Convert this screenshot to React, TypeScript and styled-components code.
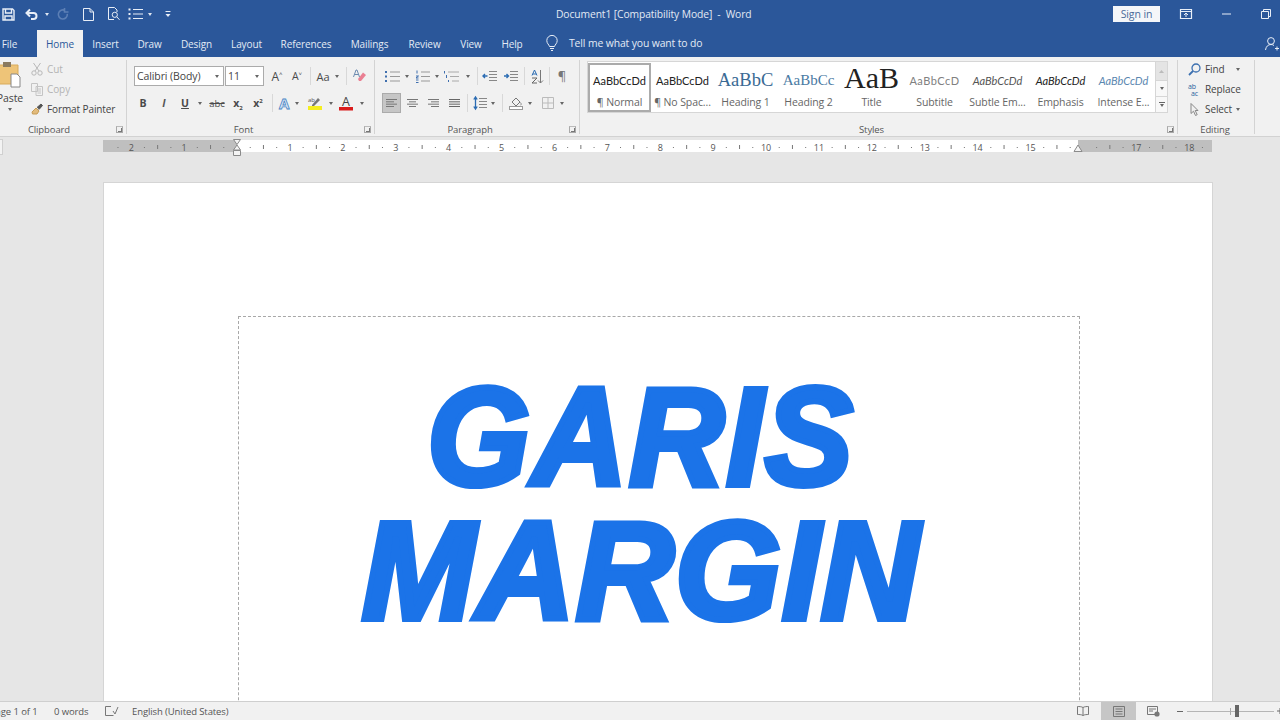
import React from "react";
import styled, { createGlobalStyle } from "styled-components";

const Global = createGlobalStyle`
  html, body { margin: 0; padding: 0; background: #e6e6e6; }
  body { font-family: "Open Sans", "Liberation Sans", sans-serif; }
`;

const Win = styled.div`
  width: 1280px; height: 720px; overflow: hidden; display: flex; flex-direction: column;
  font-size: 10.5px; color: #444; letter-spacing: -0.1px;
`;
const TitleBar = styled.div`
  height: 28px; flex: none; background: #2b579a; display: flex; align-items: center; color: #e6edf6;
`;
const Qat = styled.div`width: 556px; flex: none; display: flex; align-items: center; margin-left: -3px; margin-right: 3px;`;
const DocTitle = styled.div`width: 557px; flex: none; font-size: 10.3px; white-space: pre; color: #e3eaf4;`;
const SignIn = styled.div`
  width: 47px; height: 16px; flex: none; background: #f4f6f9; color: #4a6a99; font-size: 10.5px;
  display: flex; align-items: center; justify-content: center;
`;
const Cell = styled.div<{ $w: number }>`
  width: ${p => p.$w}px; flex: none; display: flex; align-items: center; justify-content: center; height: 100%;
`;
const Svg = styled.svg`flex: none; display: block; overflow: visible;`;
const RulerSvg = styled(Svg)`margin-left: 100px;`;
const TabBar = styled.div`
  height: 29px; flex: none; background: #2b579a; display: flex; align-items: flex-end; color: #e4ebf5; font-size: 10px;
`;
const Tab = styled.div<{ $w: number; $active?: boolean; $rp?: number }>`
  width: ${p => p.$w}px; box-sizing: border-box; height: 27px; flex: none; display: flex; align-items: center; justify-content: center;
  padding-right: ${p => p.$rp ?? 0}px; padding-top: 1px;
  background: ${p => (p.$active ? "#f1f1f1" : "transparent")};
  color: ${p => (p.$active ? "#2b579a" : "inherit")};
`;
const TellMe = styled.div`
  display: flex; align-items: center; gap: 11px; margin-left: 13px; height: 27px; padding-bottom: 2px; box-sizing: border-box;
  font-size: 10.4px; letter-spacing: -0.12px;
`;
const Person = styled.div`margin-left: auto; margin-right: 1px; height: 27px; display: flex; align-items: center;`;

const Ribbon = styled.div`
  height: 80px; flex: none; box-sizing: border-box; background: #f1f1f1; border-bottom: 1px solid #d2d2d2; display: flex; padding-top: 3px;
`;
const Group = styled.div<{ $w: number }>`
  width: ${p => p.$w}px; flex: none; box-sizing: border-box; height: 74px; border-right: 1px solid #d3d3d3; display: flex; flex-direction: column;
`;
const GroupBody = styled.div<{ $pt?: number; $pl?: number; $gap?: number; $row?: boolean }>`
  height: 62px; box-sizing: border-box; display: flex; flex-direction: ${p => (p.$row ? "row" : "column")};
  padding-top: ${p => p.$pt ?? 0}px; padding-left: ${p => p.$pl ?? 0}px; gap: ${p => p.$gap ?? 0}px;
`;
const GroupFoot = styled.div<{ $pr?: number }>`
  height: 12px; box-sizing: border-box; display: flex; align-items: center; justify-content: center; position: relative; color: #555; font-size: 9.5px;
  padding-top: 2px; padding-right: ${p => p.$pr ?? 14}px;
`;
const Launcher = styled.div`
  position: absolute; right: 3px; top: 4px; width: 7px; height: 7px; border: 1px solid #a9a9a9; border-top-color: #bbb; box-sizing: border-box;
  &::after { content: ""; position: absolute; right: 0; bottom: 0; width: 3px; height: 3px; border-right: 1px solid #777; border-bottom: 1px solid #777; }
`;
const Row = styled.div<{ $pl?: number }>`
  height: 20px; flex: none; display: flex; align-items: center; padding-left: ${p => p.$pl ?? 0}px;
`;
const Caret = styled.i<{ $light?: boolean }>`
  display: block; width: 0; height: 0; border-left: 2.5px solid transparent; border-right: 2.5px solid transparent;
  border-top: 3px solid ${p => (p.$light ? "#dfe7f2" : "#666")};
`;
const Divider = styled.i`display: block; width: 1px; height: 18px; background: #d8d8d8;`;
const FontBox = styled.div<{ $w: number }>`
  width: ${p => p.$w}px; height: 20px; flex: none; margin-right: 1px; box-sizing: border-box; background: #fff; border: 1px solid #ababab;
  display: flex; align-items: center; justify-content: space-between; padding: 0 4px 0 2px; font-size: 10.5px; color: #444;
`;
const Tool = styled.span<{ $b?: boolean; $i?: boolean; $s?: number; $c?: string; $under?: boolean; $strike?: boolean; $outline?: boolean }>`
  font-weight: ${p => (p.$b ? 700 : 400)}; font-style: ${p => (p.$i ? "italic" : "normal")}; font-size: ${p => p.$s ?? 10.5}px;
  color: ${p => p.$c ?? "#4a4a4a"}; text-decoration: ${p => (p.$strike ? "line-through" : p.$under ? "underline" : "none")};
  ${p => (p.$outline ? "-webkit-text-stroke: 0.8px #4b86c5;" : "")}
  sub, sup { font-size: 6px; line-height: 0; }
`;
const ActiveCell = styled(Cell)`
  height: 20px; box-sizing: border-box; background: #c6c6c6; border: 1px solid #ababab;
`;
const ActionRow = styled(Row)<{ $dim?: boolean }>`
  gap: 4px; color: ${p => (p.$dim ? "#b4b4b4" : "#444")}; font-size: 10px;
`;
const PasteCol = styled.div`width: 21px; flex: none; display: flex; flex-direction: column; align-items: center; color: #444;`;
const PasteLabel = styled.div`margin-top: 5px; height: 14px; font-size: 10.5px; margin-left: -1px;`;
const PasteCaret = styled.div`margin-top: 3px; margin-left: -2px;`;
const ClipList = styled.div<{ $ml?: number }>`display: flex; flex-direction: column; margin-left: ${p => p.$ml ?? 10}px; margin-top: -1px;`;

const Gallery = styled.div`
  width: 568px; height: 52px; flex: none; box-sizing: border-box; background: #fff; border: 1px solid #d6d6d6; border-right: none; display: flex; padding: 1px 0 0 0;
`;
const StyleItem = styled.div<{ $on?: boolean }>`
  width: 63px; height: 49px; flex: none; box-sizing: border-box; display: flex; flex-direction: column; align-items: center;
  border: 2px solid ${p => (p.$on ? "#ababab" : "transparent")}; overflow: hidden;
`;
const Preview = styled.div<{ $font?: string; $s?: number; $c?: string; $i?: boolean; $ls?: number; $pb?: number }>`
  height: 29px; width: 59px; flex: none; overflow: hidden; white-space: nowrap; display: flex; justify-content: center; align-items: center;
  font-family: ${p => p.$font ?? "Lato, sans-serif"}; font-size: ${p => p.$s ?? 11}px; color: ${p => p.$c ?? "#222"};
  font-style: ${p => (p.$i ? "italic" : "normal")}; letter-spacing: ${p => p.$ls ?? 0}px; padding-top: 1px; padding-bottom: ${p => p.$pb ?? 0}px;
  box-sizing: border-box; clip-path: inset(3px 0 0 0);
`;
const StyleName = styled.div`font-size: 10.5px; color: #666; white-space: nowrap; height: 16px; line-height: 16px;`;
const Scroll = styled.div`width: 13px; height: 52px; flex: none; box-sizing: border-box; display: flex; flex-direction: column; border: 1px solid #d6d6d6;`;
const ScrollBtn = styled.div<{ $h: number; $top?: boolean }>`
  height: ${p => p.$h}px; box-sizing: border-box; display: flex; align-items: center; justify-content: center; flex-direction: column; gap: 1px;
  background: ${p => (p.$top ? "#e4e4e4" : "#f8f8f8")}; border-bottom: 1px solid #d6d6d6;
  &:last-child { border-bottom: none; }
`;

const Doc = styled.div`flex: 1; min-height: 0; overflow: hidden; background: #e6e6e6; display: flex; flex-direction: column;`;
const RulerBar = styled.div`height: 20px; flex: none; display: flex;`;
const RulerCorner = styled.div`width: 3px; height: 16px; margin-top: 2px; box-sizing: border-box; background: #f3f3f3; border: 1px solid #d0d0d0; border-left: none;`;
const Page = styled.div`
  margin: 25px 0 0 103px; width: 1110px; box-sizing: border-box; background: #fff; border: 1px solid #d5d5d5; padding: 133px 134px 0 134px;
`;
const MarginBox = styled.div`
  width: 842px; height: 600px; box-sizing: border-box; border: 1px dashed #a8a8a8; padding: 53px 36px 0 0; text-align: center;
`;
const BigLine = styled.div<{ $ls: number; $sx: number }>`
  font-family: "Liberation Sans", Arial, sans-serif; font-weight: 700; font-style: italic; font-size: 139px; line-height: 134px;
  color: #1b73e8; -webkit-text-stroke: 6px #1b73e8; letter-spacing: ${p => p.$ls}px; white-space: nowrap;
  transform: scaleX(${p => p.$sx});
`;
const Status = styled.div`
  height: 19px; flex: none; box-sizing: border-box; background: #f1f1f1; border-top: 1px solid #cfcfcf; display: flex; align-items: center; font-size: 9.5px; color: #555;
`;
const PageCount = styled.div`margin-left: -10px; width: 64px; flex: none; white-space: nowrap;`;
const Words = styled.div`width: 50px; flex: none; white-space: nowrap;`;
const Lang = styled.div`margin-left: 13px; white-space: nowrap;`;
const StatusRight = styled.div`margin-left: auto; height: 100%; display: flex; align-items: center; flex: none; width: 220px;`;
const ViewBtn = styled.div<{ $w: number; $on?: boolean; $pl?: number }>`
  width: ${p => p.$w}px; height: 100%; flex: none; display: flex; align-items: center; justify-content: center; box-sizing: border-box;
  padding-left: ${p => p.$pl ?? 0}px; background: ${p => (p.$on ? "#c6c6c6" : "transparent")};
`;
const ZoomMinus = styled.div`margin-left: 7px; display: flex;`;
const Slider = styled.div`
  width: 87px; height: 1px; flex: none; background: #b5b5b5; position: relative; margin-left: 4px;
`;
const Thumb = styled.div`position: absolute; left: 48px; top: -6px; width: 4px; height: 12px; background: #666;`;
const Notch = styled.div`position: absolute; left: 43px; top: -3px; width: 1px; height: 7px; background: #aaa;`;

const I: React.FC<{ w?: number; h?: number; children: React.ReactNode; stroke?: string; sw?: number }> = ({ w = 14, h = 14, children, stroke = "#666", sw = 1 }) => (
  <Svg width={w} height={h} viewBox={`0 0 ${w} ${h}`} fill="none" stroke={stroke} strokeWidth={sw}>{children}</Svg>
);
const W = "#e8eef7";

const Lines: React.FC<{ rows: [number, number][]; c?: string; w?: number; h?: number }> = ({ rows, c = "#777", w = 14, h = 12 }) => (
  <I w={w} h={h} stroke={c}>{rows.map(([a, b], i) => <path key={i} d={`M${a} ${1.5 + i * ((h - 3) / (rows.length - 1))}H${b}`} />)}</I>
);
const ListIcon: React.FC<{ dots?: string; c?: string }> = ({ dots = "#3f6fae", c = "#999" }) => (
  <I w={16} h={13} stroke={c}>
    <path d="M6 2H16M6 6.5H16M6 11H16" />
    <path d="M1 2H3M1 6.5H3M1 11H3" stroke={dots} strokeWidth={2} />
  </I>
);
const NumberIcon: React.FC = () => (
  <I w={14} h={13} stroke="#999">
    <path d="M5 2H14M5 6.5H14M5 11H14" />
    <path d="M1 .5v3M0 6h2.5L0 8h2.5M0 10h2.5M0 12.5h2.5" stroke="#3f6fae" />
  </I>
);

const Ruler: React.FC = () => {
  const cm = 52.9, zero = 134;
  const ticks: React.ReactNode[] = [];
  for (let q = -10; q <= 74; q++) {
    const x = zero + (q / 4) * cm;
    if (q === 0 || x < 2 || x > 1107) continue;
    const n = q / 4;
    if (q % 4 === 0) {
      if (n === 16) continue;
      ticks.push(<text key={q} x={x} y={13.5} fontSize={9} fontFamily="Open Sans, sans-serif" fill="#555" textAnchor="middle" stroke="none">{Math.abs(n)}</text>);
    } else if (q % 2 === 0) {
      ticks.push(<path key={q} d={`M${x} 8v4`} stroke="#777" />);
    } else {
      ticks.push(<path key={q} d={`M${x} 10v1`} stroke="#777" />);
    }
  }
  return (
    <RulerSvg width={1110} height={20} viewBox="0 0 1110 20" fill="none">
      <rect x="0" y="3" width="1109" height="12" fill="#bfbfbf" />
      <rect x="134" y="3" width="841" height="12" fill="#fff" />
      {ticks}
      <path d="M130.5 2.5h7l-3.5 5zM134 8l-3.5 5h7zM130.5 13.5h7v5h-7z" fill="#f4f4f4" stroke="#8a8a8a" />
      <path d="M975 8l-4 6.5h8z" fill="#f4f4f4" stroke="#8a8a8a" />
    </RulerSvg>
  );
};

const styleItems = [
  { name: "¶ Normal", text: "AaBbCcDd", on: true },
  { name: "¶ No Spac...", text: "AaBbCcDd" },
  { name: "Heading 1", text: "AaBbC", font: '"Liberation Serif", serif', s: 18.5, c: "#3a6a94" },
  { name: "Heading 2", text: "AaBbCc", font: '"Liberation Serif", serif', s: 15, c: "#4a7aa3" },
  { name: "Title", text: "AaB", font: '"Liberation Serif", serif', s: 30, c: "#222", pb: 4 },
  { name: "Subtitle", text: "AaBbCcD", c: "#808080", ls: 0.5 },
  { name: "Subtle Em...", text: "AaBbCcDd", c: "#555", i: true },
  { name: "Emphasis", text: "AaBbCcDd", c: "#222", i: true },
  { name: "Intense E...", text: "AaBbCcDd", c: "#5b87b0", i: true },
];

export default function App() {
  return (
    <Win>
      <Global />
      <TitleBar>
        <Qat>
          <Cell $w={22}><I w={13} h={13} stroke={W} sw={1.4}><path d="M1 1h9.5L12 2.5V12H1zM3.5 1v4h6V1M3 12V8h7v4" /></I></Cell>
          <Cell $w={26}><I w={14} h={12} stroke={W} sw={2}><path d="M5 1.5L1.5 5 5 8.5M2 5h6.5a3 3 0 0 1 0 6H6" /></I></Cell>
          <Cell $w={4}><Caret $light /></Cell>
          <Cell $w={28}><I w={12} h={12} stroke="#5c7fb5" sw={1.6}><path d="M8 2.5a4.5 4.5 0 1 0 2.3 3.4M7.5 0v4h4" /></I></Cell>
          <Cell $w={22}><I w={11} h={13} stroke={W}><path d="M.5.5h6.5l3.5 3.5v8.5H.5zM7 .5V4h3.5" /></I></Cell>
          <Cell $w={28}><I w={13} h={14} stroke={W}><path d="M1.5.5h6L10 3v2M1.5.5v12H7" /><circle cx="7.8" cy="7.8" r="2.6" /><path d="M9.8 9.8l2.7 3" /></I></Cell>
          <Cell $w={16}><I w={15} h={12} stroke={W}><path d="M5 1.5h10M5 6h10M5 10.5h10" /><path d="M.5 1.5h2M.5 6h2M.5 10.5h2" strokeWidth={1.8} /></I></Cell>
          <Cell $w={14}><Caret $light /></Cell>
          <Cell $w={22}><I w={6} h={7} stroke={W}><path d="M.5.5h5" /><path d="M.5 3l2.5 3 2.5-3z" fill={W} stroke="none" /></I></Cell>
        </Qat>
        <DocTitle>Document1 [Compatibility Mode]  -  Word</DocTitle>
        <SignIn>Sign in</SignIn>
        <Cell $w={52}><I w={12} h={10} stroke={W}><path d="M.5.5h11v9H.5zM.5 2.5h11" strokeWidth={1.2} /><path d="M6 8V4M4 6l2-2 2 2" /></I></Cell>
        <Cell $w={28}><I w={9} h={2} stroke={W}><path d="M0 1h9" /></I></Cell>
        <Cell $w={52}><I w={10} h={10} stroke={W}><path d="M.5 2.5h7v7h-7zM2.5 2.5v-2h7v7h-2" /></I></Cell>
      </TitleBar>

      <TabBar>
        <Tab $w={37} $rp={18}>File</Tab>
        <Tab $w={46} $active>Home</Tab>
        <Tab $w={45}>Insert</Tab>
        <Tab $w={43}>Draw</Tab>
        <Tab $w={51}>Design</Tab>
        <Tab $w={49}>Layout</Tab>
        <Tab $w={70}>References</Tab>
        <Tab $w={57}>Mailings</Tab>
        <Tab $w={53}>Review</Tab>
        <Tab $w={40}>View</Tab>
        <Tab $w={42}>Help</Tab>
        <TellMe>
          <I w={12} h={16} stroke={W}><path d="M3.5 11.5C3 9.5.8 8.5.8 5.6a5.2 5.2 0 0 1 10.4 0c0 2.9-2.2 3.9-2.7 5.9zM4 13.5h4M5 15.5h2" /></I>
          <span>Tell me what you want to do</span>
        </TellMe>
        <Person><I w={14} h={14} stroke={W}><circle cx="6" cy="4" r="3.4" /><path d="M.5 13c.5-3.5 2.5-5.5 5.5-5.5 1.3 0 2.3.4 3 1M10 11.5h4M12 9.5v4" /></I></Person>
      </TabBar>

      <Ribbon>
        <Group $w={127}>
          <GroupBody $row>
            <PasteCol>
              <I w={17} h={26}>
                <path d="M-6 5h22v19H-6z" fill="#eec478" stroke="#d9ab5a" />
                <path d="M1 2h8v5H1z" fill="#8a7a5f" stroke="none" />
                <path d="M9 14h6l3 3v10H9z" fill="#fff" stroke="#888" />
              </I>
              <PasteLabel>Paste</PasteLabel>
              <PasteCaret><Caret /></PasteCaret>
            </PasteCol>
            <ClipList>
              <ActionRow $dim>
                <I w={12} h={14} stroke="#b8b8b8"><circle cx="3" cy="11" r="2.2" /><circle cx="9" cy="11" r="2.2" /><path d="M4 9L9.5 1M8 9L2.5 1" /></I>
                <span>Cut</span>
              </ActionRow>
              <ActionRow $dim>
                <I w={12} h={14} stroke="#c4c4c4"><path d="M.5 1.5h6v8h-6zM5 4.5h6.5v9H5zM6.5 7h3.5M6.5 9h3.5M6.5 11h3.5" /></I>
                <span>Copy</span>
              </ActionRow>
              <ActionRow>
                <I w={12} h={12}><path d="M1 9l4-4 3 3-2 3H1.5z" fill="#e2bb7c" stroke="#c79c56" /><path d="M6 4.5l4-3.5 1.5 1.5-3.5 4" fill="#555" stroke="#555" /></I>
                <span>Format Painter</span>
              </ActionRow>
            </ClipList>
          </GroupBody>
          <GroupFoot $pr={28}>Clipboard<Launcher /></GroupFoot>
        </Group>

        <Group $w={248}>
          <GroupBody $pt={6} $gap={7}>
            <Row $pl={7}>
              <FontBox $w={90}><span>Calibri (Body)</span><Caret /></FontBox>
              <FontBox $w={39}><span>11</span><Caret /></FontBox>
              <Cell $w={24}><Tool $s={12}>A<sup>˄</sup></Tool></Cell>
              <Cell $w={16}><Tool $s={10.5}>A<sup>˅</sup></Tool></Cell>
              <Cell $w={10}><Divider /></Cell>
              <Cell $w={16}><Tool $s={11}>Aa</Tool></Cell>
              <Cell $w={12}><Caret /></Cell>
              <Cell $w={6}><Divider /></Cell>
              <Cell $w={20}>
                <I w={14} h={14} stroke="none">
                  <path d="M6 10l5-6.5 3 2.5-5 6H7z" fill="#ea7f92" />
                  <path d="M1.5 8L4 1h1l2.5 7M2.5 5.5h4" stroke="#6d8bb0" />
                </I>
              </Cell>
            </Row>
            <Row $pl={6}>
              <Cell $w={20}><Tool $b>B</Tool></Cell>
              <Cell $w={22}><Tool $i $b $c="#555">I</Tool></Cell>
              <Cell $w={20}><Tool $b $under>U</Tool></Cell>
              <Cell $w={10}><Caret /></Cell>
              <Cell $w={24}><Tool $s={9.5} $strike>abc</Tool></Cell>
              <Cell $w={18}><Tool $b>x<sub>2</sub></Tool></Cell>
              <Cell $w={22}><Tool $b>x<sup>2</sup></Tool></Cell>
              <Cell $w={6}><Divider /></Cell>
              <Cell $w={18}><Tool $s={15} $b $c="#dce9f7" $outline>A</Tool></Cell>
              <Cell $w={8}><Caret /></Cell>
              <Cell $w={28}><I w={14} h={14} stroke="none"><rect x="0" y="10" width="14" height="4" fill="#f5ee1f" /><path d="M4 9l6-7 2 2-6 6H4z" fill="#777" /><text x="0" y="6" fontSize="6" fill="#555" fontFamily="Open Sans">ab</text></I></Cell>
              <Cell $w={4}><Caret /></Cell>
              <Cell $w={26}><I w={14} h={15} stroke="none"><text x="7" y="10" fontSize="12.5" fill="#444" textAnchor="middle" fontFamily="Open Sans">A</text><rect y="11" width="14" height="3.5" fill="#d91c1c" /></I></Cell>
              <Cell $w={6}><Caret /></Cell>
            </Row>
          </GroupBody>
          <GroupFoot>Font<Launcher /></GroupFoot>
        </Group>

        <Group $w={205}>
          <GroupBody $pt={6} $gap={7}>
            <Row $pl={7}>
              <Cell $w={20}><ListIcon /></Cell>
              <Cell $w={9}><Caret /></Cell>
              <Cell $w={24}><NumberIcon /></Cell>
              <Cell $w={4}><Caret /></Cell>
              <Cell $w={24}><I w={15} h={13} stroke="#aaa"><path d="M4 2h11M6 6.5h9M8 11h7" /><path d="M.5 1v2.5M2.5 5v3M4.5 10v2" stroke="#3f6fae" /></I></Cell>
              <Cell $w={10}><Caret /></Cell>
              <Cell $w={8}><Divider /></Cell>
              <Cell $w={18}><I w={14} h={12} stroke="#888"><path d="M6 1.5h8M6 4.5h8M6 7.5h8M6 10.5h8" /><path d="M4.5 6H0M2 4L0 6l2 2" stroke="#2b6cb3" strokeWidth={1.4} /></I></Cell>
              <Cell $w={24}><I w={14} h={12} stroke="#888"><path d="M6 1.5h8M6 4.5h8M6 7.5h8M6 10.5h8" /><path d="M0 6h4.5M2.5 4l2 2-2 2" stroke="#2b6cb3" strokeWidth={1.4} /></I></Cell>
              <Cell $w={2}><Divider /></Cell>
              <Cell $w={24}><I w={13} h={15} stroke="#777"><path d="M9.5 1v13M7 11.5l2.5 2.5 2.5-2.5" /><path d="M1 6.5L3.5 1 6 6.5M1.8 5h3.4" stroke="#2b6cb3" /><path d="M1 9h5L1 14h5" stroke="#666" /></I></Cell>
              <Cell $w={1}><Divider /></Cell>
              <Cell $w={24}><Tool $s={13} $c="#777">¶</Tool></Cell>
            </Row>
            <Row>
              <Cell $w={7} />
              <ActiveCell $w={19}><Lines rows={[[0, 11], [0, 8], [0, 11], [0, 8]]} c="#777" w={11} h={10} /></ActiveCell>
              <Cell $w={22}><Lines rows={[[0, 11], [2, 9], [0, 11], [2, 9]]} w={11} h={10} /></Cell>
              <Cell $w={20}><Lines rows={[[0, 11], [3, 11], [0, 11], [3, 11]]} w={11} h={10} /></Cell>
              <Cell $w={22}><Lines rows={[[0, 11], [0, 11], [0, 11], [0, 11]]} w={11} h={10} c="#666" /></Cell>
              <Cell $w={4}><Divider /></Cell>
              <Cell $w={22}><I w={14} h={14} stroke="#888"><path d="M6 2.5h8M6 5.5h8M6 8.5h8M6 11.5h8" /><path d="M2.5 1v12M.8 3.5l1.7-2.5 1.7 2.5M.8 10.5l1.7 2.5 1.7-2.5" stroke="#2b6cb3" strokeWidth={1.3} /></I></Cell>
              <Cell $w={4}><Caret /></Cell>
              <Cell $w={14}><Divider /></Cell>
              <Cell $w={14}><I w={15} h={14}><path d="M3 6l4-4 4 4-4 4z" stroke="#777" /><path d="M11.5 6.5c1 1.5 1 2.5 0 2.5" stroke="#888" /><rect x=".5" y="10.5" width="13" height="3" fill="#fff" stroke="#999" /></I></Cell>
              <Cell $w={14}><Caret /></Cell>
              <Cell $w={22}><I w={12} h={12} stroke="#bbb"><path d="M.5.5h11v11H.5zM6 .5v11M.5 6h11" /></I></Cell>
              <Cell $w={6}><Caret /></Cell>
            </Row>
          </GroupBody>
          <GroupFoot>Paragraph<Launcher /></GroupFoot>
        </Group>

        <Group $w={598}>
          <GroupBody $row $pt={1} $pl={7}>
            <Gallery>
              {styleItems.map(s => (
                <StyleItem key={s.name} $on={s.on}>
                  <Preview $font={s.font} $s={s.s} $c={s.c} $i={s.i} $ls={s.ls} $pb={s.pb}>{s.text}</Preview>
                  <StyleName>{s.name}</StyleName>
                </StyleItem>
              ))}
            </Gallery>
            <Scroll>
              <ScrollBtn $h={19} $top><I w={5} h={3}><path d="M2.5 0L5 3H0z" fill="#bbb" stroke="none" /></I></ScrollBtn>
              <ScrollBtn $h={16}><Caret /></ScrollBtn>
              <ScrollBtn $h={15}><I w={6} h={1}><path d="M0 .5h6" /></I><Caret /></ScrollBtn>
            </Scroll>
          </GroupBody>
          <GroupFoot>Styles<Launcher /></GroupFoot>
        </Group>

        <Group $w={77}>
          <GroupBody $pl={10}>
            <ClipList $ml={0}>
              <ActionRow>
                <I w={13} h={13} stroke="#3c70b0" sw={1.3}><circle cx="8" cy="5" r="4" /><path d="M5 8l-4 4" strokeWidth={1.8} /></I>
                <span>Find</span>
                <Cell $w={18}><Caret /></Cell>
              </ActionRow>
              <ActionRow>
                <I w={13} h={13} stroke="none">
                  <text x="0" y="6" fontSize="7" fill="#2b5f9e" fontFamily="Open Sans">ab</text>
                  <text x="3" y="12.5" fontSize="7" fill="#2b5f9e" fontFamily="Open Sans">ac</text>
                </I>
                <span>Replace</span>
              </ActionRow>
              <ActionRow>
                <I w={13} h={13} stroke="#888"><path d="M3 .5v10l2.5-2.3 2 4.3 1.7-.8-2-4.2H10z" /></I>
                <span>Select</span>
                <Caret />
              </ActionRow>
            </ClipList>
          </GroupBody>
          <GroupFoot $pr={2}>Editing</GroupFoot>
        </Group>
      </Ribbon>

      <Doc>
        <RulerBar>
          <RulerCorner />
          <Ruler />
        </RulerBar>
        <Page>
          <MarginBox>
            <BigLine $ls={2} $sx={0.95}>GARIS</BigLine>
            <BigLine $ls={1} $sx={0.98}>MARGIN</BigLine>
          </MarginBox>
        </Page>
      </Doc>

      <Status>
        <PageCount>Page 1 of 1</PageCount>
        <Words>0 words</Words>
        <Cell $w={15}><I w={13} h={11} stroke="#777"><path d="M6 .5H.5v9h8M8 5l2 3 3-7" /></I></Cell>
        <Lang>English (United States)</Lang>
        <StatusRight>
          <ViewBtn $w={41} $pl={4}><I w={12} h={10} stroke="#777"><path d="M6 1.5C4.5.5 2 .5.5.5v8c1.5 0 4 0 5.5 1 1.5-1 4-1 5.5-1v-8c-1.5 0-4 0-5.5 1zM6 1.5v8" /></I></ViewBtn>
          <ViewBtn $w={35} $on><I w={12} h={11} stroke="#777"><path d="M.5.5h11v10H.5zM2.5 3h7M2.5 5.5h7M2.5 8h7" /></I></ViewBtn>
          <ViewBtn $w={34}><I w={13} h={11} stroke="#777"><path d="M.5.5h10v8H.5zM2 3h7M2 5h4" /><circle cx="10" cy="8" r="2.6" fill="#777" stroke="none" /></I></ViewBtn>
          <ZoomMinus><I w={6} h={1}><path d="M0 .5h6" /></I></ZoomMinus>
          <Slider><Notch /><Thumb /></Slider>
          <Cell $w={12}><I w={6} h={6}><path d="M0 3h6M3 0v6" /></I></Cell>
        </StatusRight>
      </Status>
    </Win>
  );
}
